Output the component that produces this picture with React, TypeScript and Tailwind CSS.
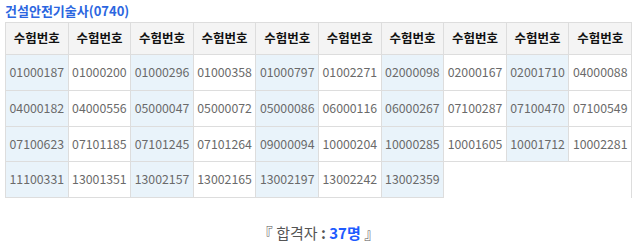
import React from "react";

const nums = [
  "01000187","01000200","01000296","01000358","01000797","01002271","02000098","02000167","02001710","04000088",
  "04000182","04000556","05000047","05000072","05000086","06000116","06000267","07100287","07100470","07100549",
  "07100623","07101185","07101245","07101264","09000094","10000204","10000285","10001605","10001712","10002281",
  "11100331","13001351","13002157","13002165","13002197","13002242","13002359",
];

export default function App() {
  const cells: (string | null)[] = [...nums];
  while (cells.length % 10 !== 0) cells.push(null);
  return (
    <div className="w-[636px] h-[242px] bg-white pl-[5px] pr-[4px] font-['Noto_Sans_CJK_KR',sans-serif]">
      <div className="h-[22px] flex items-center text-[13px] font-bold text-[#2b66e0] leading-none pb-[2px]">
        건설안전기술사(0740)
      </div>
      <div className="grid grid-cols-10 border-l border-t border-[#dddddd]">
        {Array.from({ length: 10 }).map((_, i) => (
          <div
            key={"h" + i}
            className="h-[32px] flex items-center justify-center bg-[#f4f4f4] border-r border-b border-[#dddddd] text-[12.5px] font-bold text-[#111]"
          >
            수험번호
          </div>
        ))}
        {cells.map((n, i) => {
          const col = i % 10;
          const blue = col % 2 === 0;
          if (n === null) {
            return (
              <div
                key={i}
                className={col === 9 ? "h-[35.75px] border-r border-[#dddddd]" : "h-[35.75px]"}
              />
            );
          }
          return (
            <div
              key={i}
              className={
                (blue ? "bg-[#e9f3fa] " : "bg-white ") +
                "h-[35.75px] flex items-center justify-center border-r border-b border-[#dddddd] text-[12.3px] text-[#6a6a6a]"
              }
            >
              {n}
            </div>
          );
        })}
      </div>
      <div className="mt-[25px] text-center text-[15px] leading-[20px] text-[#555]">
        『 합격자 <span className="font-bold">:</span>{" "}
        <span className="font-bold text-[#1e5bff]">37명</span> 』
      </div>
    </div>
  );
}
